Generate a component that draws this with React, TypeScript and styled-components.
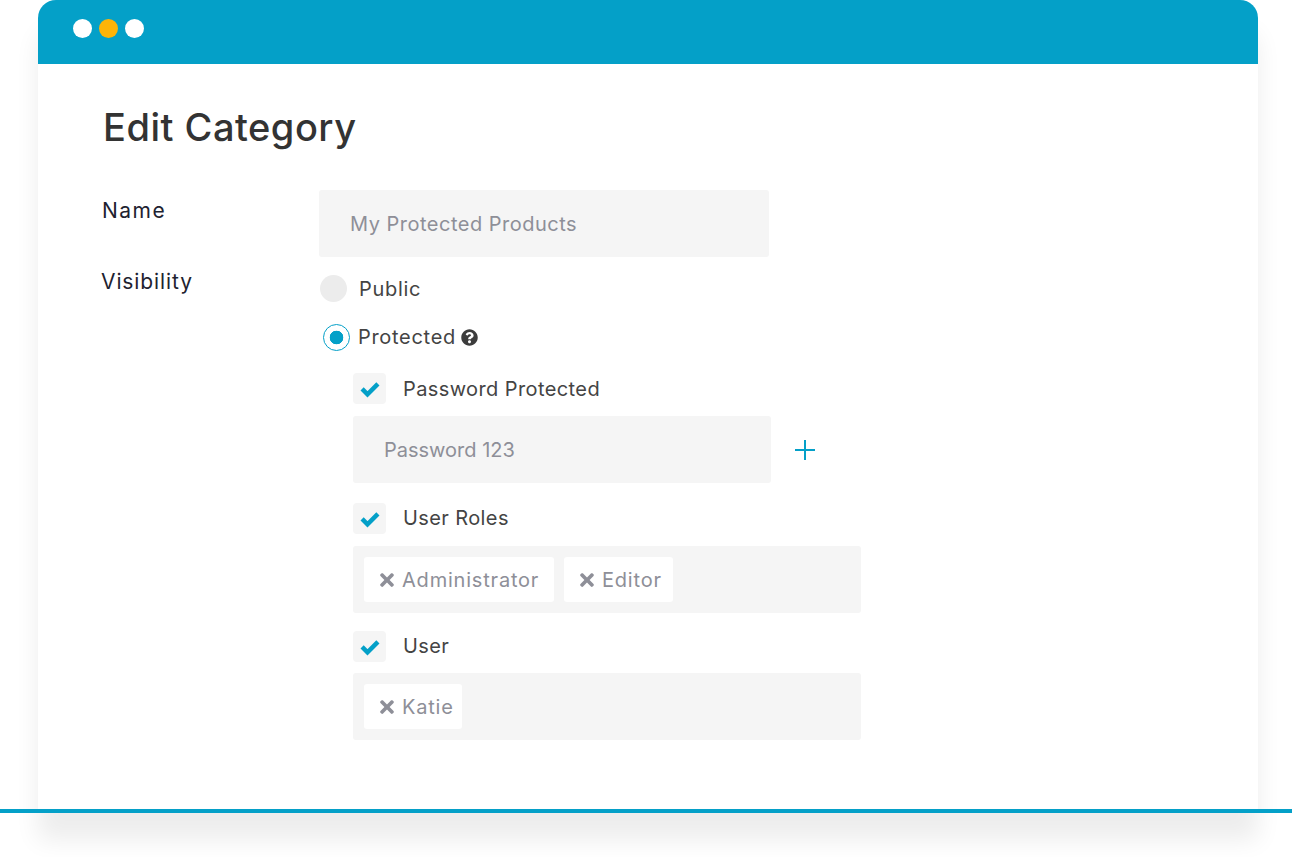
import { FaQuestionCircle, FaTimes } from 'react-icons/fa'
import styled, { createGlobalStyle } from 'styled-components'

const GlobalStyle = createGlobalStyle`
	html,
	body {
		margin: 0;
		height: 857px;
		overflow: hidden;
		background: #fff;
	}

	body {
		font-family: 'Inter', 'Noto Sans', sans-serif;
	}
`

type ChecklistGroup = {
	label: string
	tags: { name: string; width: number }[]
	boxGap: number
}

const groups: ChecklistGroup[] = [
	{
		label: 'User Roles',
		tags: [
			{ name: 'Administrator', width: 190 },
			{ name: 'Editor', width: 109 },
		],
		boxGap: 12,
	},
	{ label: 'User', tags: [{ name: 'Katie', width: 98 }], boxGap: 11 },
]

const CheckMark = () => (
	<svg viewBox="0 0 33 31" width={33} height={31}>
		<polyline points="9.1,15.9 14.5,21.3 24.9,10.9" fill="none" stroke="#04a0c8" strokeWidth="4.5" />
	</svg>
)

const OptionText = styled.span`
	font-size: 20px;
	line-height: 26px;
	letter-spacing: 0.4px;
	color: #444;
`

const RadioText = styled(OptionText)`
	letter-spacing: 0.7px;
`

const GroupText = styled(OptionText)`
	margin-bottom: 2px;
`

const App = () => (
	<>
		<GlobalStyle />
		<Stage>
			<Window>
				<TitleBar>
					<Dot />
					<Dot $accent />
					<Dot />
				</TitleBar>
				<Content>
					<Title>Edit Category</Title>
					<NameRow>
						<FieldLabel $top={8} $tracking={1.5} $indent={1}>
							Name
						</FieldLabel>
						<NameField $width={450}>My Protected Products</NameField>
					</NameRow>
					<VisibilityRow>
						<FieldLabel $top={12} $tracking={0.9}>
							Visibility
						</FieldLabel>
						<Options>
							<RadioRow>
								<Radio />
								<RadioText>Public</RadioText>
							</RadioRow>
							<ProtectedRow>
								<Radio $checked />
								<RadioText>Protected</RadioText>
								<HelpIcon size={17} />
							</ProtectedRow>
							<Nested>
								<CheckRow>
									<CheckBox>
										<CheckMark />
									</CheckBox>
									<OptionText>Password Protected</OptionText>
								</CheckRow>
								<PasswordRow>
									<TextField $width={418}>Password 123</TextField>
									<PlusIcon viewBox="0 0 20 20" width={20} height={20}>
										<path d="M10 0v20M0 10h20" stroke="#04a0c8" strokeWidth="2" fill="none" />
									</PlusIcon>
								</PasswordRow>
								{groups.map((group) => (
									<div key={group.label}>
										<CheckRow>
											<CheckBox>
												<CheckMark />
											</CheckBox>
											<GroupText>{group.label}</GroupText>
										</CheckRow>
										<TagBox $gap={group.boxGap}>
											{group.tags.map((tag) => (
												<Tag key={tag.name} $width={tag.width}>
													<FaTimes size={20} />
													{tag.name}
												</Tag>
											))}
										</TagBox>
									</div>
								))}
							</Nested>
						</Options>
					</VisibilityRow>
				</Content>
			</Window>
			<BaseLine />
		</Stage>
	</>
)

const Stage = styled.div`
	display: flex;
	flex-direction: column;
	height: 857px;
	overflow: hidden;
`

const Window = styled.div`
	flex: none;
	height: 809px;
	margin: 0 34px 0 38px;
	background: #fff;
	border-radius: 18px 18px 0 0;
	box-shadow: 0 31px 24px rgba(0, 0, 0, 0.075);
`

const TitleBar = styled.div`
	display: flex;
	align-items: center;
	gap: 7px;
	height: 56px;
	padding: 0 0 8px 35px;
	background: #04a0c8;
	border-radius: 18px 18px 0 0;
`

const Dot = styled.span<{ $accent?: boolean }>`
	width: 19px;
	height: 19px;
	border-radius: 50%;
	background: ${(props) => (props.$accent ? '#fdb408' : '#fff')};
`

const Content = styled.div`
	padding: 40px 0 0 63px;
`

const Title = styled.h1`
	margin: 0 0 40px 2px;
	font-size: 38px;
	line-height: 46px;
	font-weight: 500;
	letter-spacing: 0.5px;
	color: #333;
`

const NameRow = styled.div`
	display: flex;
`

const VisibilityRow = styled.div`
	display: flex;
`

const FieldLabel = styled.div<{ $top: number; $tracking: number; $indent?: number }>`
	box-sizing: border-box;
	flex: none;
	width: 218px;
	padding-top: ${(props) => props.$top}px;
	padding-left: ${(props) => props.$indent ?? 0}px;
	font-size: 21px;
	line-height: 26px;
	letter-spacing: ${(props) => props.$tracking}px;
	color: #1e2230;
`

const Options = styled.div`
	display: flex;
	flex-direction: column;
	padding-top: 18px;
`

const RadioRow = styled.div`
	display: flex;
	align-items: center;
	gap: 12px;
	height: 27px;
	margin-left: 1px;
`

const ProtectedRow = styled(RadioRow)`
	gap: 8px;
	margin: 22px 0 0 4px;

	${RadioText} {
		margin-bottom: 2px;
	}
`

const Radio = styled.span<{ $checked?: boolean }>`
	box-sizing: border-box;
	flex: none;
	width: 27px;
	height: 27px;
	border-radius: 50%;
	background: ${(props) =>
		props.$checked ? 'radial-gradient(circle, #04a0c8 0 6.6px, #fff 7.1px)' : '#ececec'};
	border: ${(props) => (props.$checked ? '1px solid #04a0c8' : 'none')};
`

const HelpIcon = styled(FaQuestionCircle)`
	margin-left: -3px;
	color: #3c3c3c;
`

const Nested = styled.div`
	display: flex;
	flex-direction: column;
	margin: 22px 0 0 34px;
`

const CheckRow = styled.div`
	display: flex;
	align-items: center;
	gap: 17px;
	height: 31px;
`

const CheckBox = styled.span`
	display: flex;
	width: 33px;
	height: 31px;
	border-radius: 4px;
	background: #f5f5f5;
`

const TextField = styled.div<{ $width: number }>`
	box-sizing: border-box;
	display: flex;
	align-items: center;
	width: ${(props) => props.$width}px;
	height: 67px;
	padding-left: 31px;
	border-radius: 3px;
	background: #f5f5f5;
	font-size: 20px;
	color: #8e8f98;
`

const NameField = styled(TextField)`
	letter-spacing: 0.5px;
`

const PasswordRow = styled.div`
	display: flex;
	align-items: center;
	gap: 24px;
	margin: 12px 0 20px;
`

const PlusIcon = styled.svg`
	flex: none;
`

const TagBox = styled.div<{ $gap: number }>`
	box-sizing: border-box;
	display: flex;
	gap: 10px;
	width: 508px;
	height: 67px;
	margin: ${(props) => props.$gap}px 0 18px;
	padding: 11px;
	border-radius: 3px;
	background: #f5f5f5;
`

const Tag = styled.div<{ $width: number }>`
	box-sizing: border-box;
	display: flex;
	align-items: center;
	gap: 5px;
	width: ${(props) => props.$width}px;
	height: 45px;
	padding-left: 13px;
	border-radius: 3px;
	background: #fff;
	font-size: 20px;
	letter-spacing: 0.8px;
	color: #8e8f98;
`

const BaseLine = styled.div`
	flex: none;
	position: relative;
	height: 4px;
	background: #04a0c8;
`

export default App
